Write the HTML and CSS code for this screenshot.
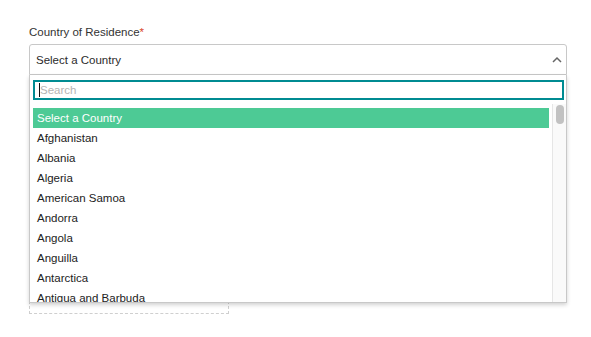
FILE: index.html
```html
<!DOCTYPE html>
<html>
<head>
<meta charset="utf-8">
<link rel="stylesheet" href="styles.css">
</head>
<body>
<div class="page">
  <div class="field">
    <label class="label">Country of Residence<span class="req">*</span></label>
    <div class="select">
      <span class="select-value">Select a Country</span>
      <svg class="chev" width="10" height="7" viewBox="0 0 10 7"><path d="M1 6 L5 2 L9 6" fill="none" stroke="#666" stroke-width="1.5"/></svg>
    </div>
    <div class="dropzone"></div>
    <div class="dropdown">
      <div class="search-wrap">
        <input class="search" type="text" placeholder="Search">
        <span class="caret"></span>
      </div>
      <div class="list-area">
        <ul class="list">
          <li class="item active">Select a Country</li>
          <li class="item">Afghanistan</li>
          <li class="item">Albania</li>
          <li class="item">Algeria</li>
          <li class="item">American Samoa</li>
          <li class="item">Andorra</li>
          <li class="item">Angola</li>
          <li class="item">Anguilla</li>
          <li class="item">Antarctica</li>
          <li class="item">Antigua and Barbuda</li>
        </ul>
        <div class="scrollbar"><div class="thumb"></div></div>
      </div>
    </div>
  </div>
</div>
</body>
</html>
```
FILE: styles.css
```css
html, body {
  margin: 0;
  padding: 0;
  background: #fff;
}
body {
  font-family: "Liberation Sans", Arial, sans-serif;
  font-size: 11.5px;
  color: #333;
}
.page {
  padding: 24px 24px 0 29px;
}
.field {
  position: relative;
  width: 538px;
}
.label {
  display: block;
  line-height: 16px;
  height: 16px;
  color: #333;
}
.req {
  color: #d9452b;
}
.select {
  margin-top: 4px;
  height: 29px;
  border: 1px solid #c8c8c8;
  border-radius: 3px 3px 0 0;
  display: flex;
  align-items: center;
  justify-content: space-between;
  padding: 0 4px 0 6px;
  color: #333;
}
.select-value {
  line-height: 29px;
  padding-top: 2px;
  color: #2b2b2b;
}
.dropzone {
  margin-top: 10px;
  width: 198px;
  height: 227px;
  border: 1px dashed #cfcfcf;
}
.dropdown {
  position: absolute;
  top: 51px;
  left: 0;
  width: 536px;
  height: 227px;
  border: 1px solid #c8c8c8;
  border-top: 0;
  background: #fff;
  box-shadow: 0 2px 4px rgba(0,0,0,0.18);
  display: flex;
  flex-direction: column;
}
.search-wrap {
  position: relative;
  padding: 5px 2px 4px 3px;
}
.search {
  display: block;
  box-sizing: border-box;
  width: 531px;
  height: 20px;
  margin: 0;
  border: 2px solid #008b92;
  padding: 0 4px 0 5px;
  font-family: "Liberation Sans", Arial, sans-serif;
  font-size: 11.5px;
  color: #333;
  outline: none;
  border-radius: 0;
}
.search::placeholder {
  color: #b4b4b4;
}
.caret {
  position: absolute;
  left: 9px;
  top: 8px;
  width: 1px;
  height: 14px;
  background: #111;
}
.list-area {
  flex: 1;
  display: flex;
  min-height: 0;
}
.list {
  list-style: none;
  margin: 0;
  padding: 4px 0 0 0;
  flex: 1;
  overflow: hidden;
}
.scrollbar {
  background: #fafafa;
  border-left: 1px solid #e6e6e6;
  padding: 0 2px 0 3px;
  box-sizing: border-box;
  flex: 0 0 14px;
}
.thumb {
  width: 8px;
  height: 19px;
  margin-top: 1px;
  border-radius: 4px;
  background: #c2c2c2;
}
.item {
  height: 20px;
  line-height: 20px;
  margin: 0 3px;
  padding: 0 4px;
  color: #222;
  white-space: nowrap;
}
.item.active {
  background: #4dca95;
  color: #fff;
}
```
